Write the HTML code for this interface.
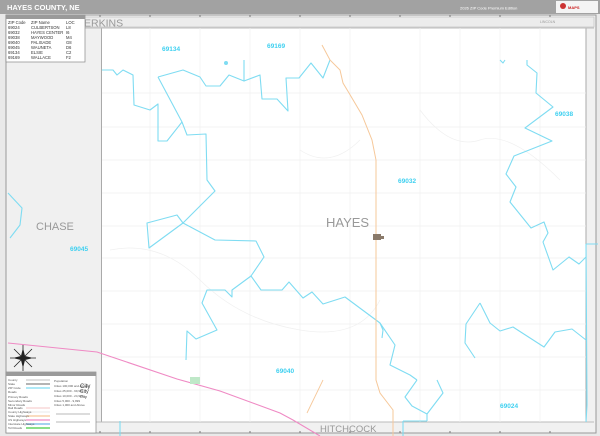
<!DOCTYPE html>
<html><head><meta charset="utf-8"><style>
html,body{margin:0;padding:0;background:#fff;}
body{width:600px;height:436px;overflow:hidden;position:relative;font-family:"Liberation Sans",sans-serif;}
</style></head><body>
<svg width="600" height="436" viewBox="0 0 600 436" xmlns="http://www.w3.org/2000/svg" style="position:absolute;left:0;top:0">
<rect x="0" y="0" width="600" height="436" fill="#e9e9e9"/>
<rect x="0" y="0" width="600" height="14" fill="#a2a2a2"/>
<text x="7" y="10" font-size="7.5" font-weight="bold" fill="#fff" font-family="Liberation Sans">HAYES COUNTY, NE</text>
<text x="460" y="9.5" font-size="4" fill="#fff" font-family="Liberation Sans">2026 ZIP Code Premium Edition</text>
<rect x="556" y="1" width="42" height="12" fill="#f4f4f4"/>
<circle cx="563" cy="6" r="3" fill="#c33"/>
<text x="568" y="9" font-size="4" fill="#c22" font-weight="bold">MAPS</text>
<rect x="6" y="15" width="590" height="418" fill="#f1f1f1" stroke="#999" stroke-width="1"/>
<rect x="8" y="17" width="586" height="10" fill="#ececec" stroke="#bbb" stroke-width="0.6"/>
<rect x="8" y="28" width="94" height="394" fill="#f0f0f0"/>
<rect x="102" y="28" width="484" height="394" fill="#fff"/>
<line x1="101.5" y1="28" x2="101.5" y2="422" stroke="#aaa" stroke-width="1"/>
<line x1="586" y1="28" x2="586" y2="422" stroke="#aaa" stroke-width="1"/>
<line x1="8" y1="422" x2="594" y2="422" stroke="#bbb" stroke-width="1"/>
<line x1="8" y1="28" x2="594" y2="28" stroke="#bbb" stroke-width="1"/>
<g stroke="#777" stroke-width="1">
<line x1="50" y1="15" x2="50" y2="17"/><line x1="100" y1="15" x2="100" y2="17"/><line x1="150" y1="15" x2="150" y2="17"/><line x1="200" y1="15" x2="200" y2="17"/><line x1="250" y1="15" x2="250" y2="17"/><line x1="300" y1="15" x2="300" y2="17"/><line x1="350" y1="15" x2="350" y2="17"/><line x1="400" y1="15" x2="400" y2="17"/><line x1="450" y1="15" x2="450" y2="17"/><line x1="500" y1="15" x2="500" y2="17"/><line x1="550" y1="15" x2="550" y2="17"/>
<line x1="50" y1="431" x2="50" y2="433"/><line x1="100" y1="431" x2="100" y2="433"/><line x1="150" y1="431" x2="150" y2="433"/><line x1="200" y1="431" x2="200" y2="433"/><line x1="250" y1="431" x2="250" y2="433"/><line x1="300" y1="431" x2="300" y2="433"/><line x1="350" y1="431" x2="350" y2="433"/><line x1="400" y1="431" x2="400" y2="433"/><line x1="450" y1="431" x2="450" y2="433"/><line x1="500" y1="431" x2="500" y2="433"/><line x1="550" y1="431" x2="550" y2="433"/>
</g>
<g stroke="#f0f0f0" stroke-width="0.7" fill="none">
<path d="M102 93H586M102 127H586M102 160H586M102 193H586M102 226H586M102 258H586M102 291H586M102 324H586M102 357H586M102 390H586"/>
<path d="M150 28V422M200 28V422M250 28V422M300 28V422M350 28V422M420 28V422M460 28V422M500 28V422M540 28V422"/>
<path d="M110 250Q160 240 200 280T300 330T380 300M420 110Q450 150 480 140T560 180M300 150Q330 170 360 140"/>
</g>
<g stroke="#7fdcf2" stroke-width="1.1" fill="none" stroke-linejoin="round">
<path d="M102 70L113 70L117 75L123 70L133 75L134 105L150 110L158 104L158 141L167 141L182 122"/>
<path d="M158 77L183 70L200 77L206 86L220 86L229 75L244 81L244 60"/>
<path d="M244 81L260 75L262 99L277 99L288 111L286 78L299 78L311 63L323 78L330 60"/>
<path d="M158 77L182 122L187 135L206 134L207 180L215 191L183 223L177 215L147 223L149 248L183 223"/>
<path d="M183 223L215 240L256 241L264 257L251 276L232 290L232 297L225 290L207 290L202 303L217 330L196 339L187 331L186 360"/>
<path d="M251 276L261 290L282 290L289 282L303 298L312 292L323 304L345 297L380 323L383 330L382 338"/>
<path d="M500 60L503 63L505 60M527 60L527 65L537 73L536 93L553 107L525 128L552 141L514 156L506 174L516 187L510 202L531 228L544 222L548 233L543 242L553 270L569 257L579 264L586 257"/>
<path d="M586 244L598 244M586 244L587 405L586 422"/>
<path d="M480 303L466 324L465 343L475 358M480 303L490 323L500 331L513 327L544 347L555 332L572 329L586 340"/>
<path d="M417 380L405 397L412 406L427 414L443 393L437 380M427 414L427 421M403 421L427 421M403 421L403 436"/>
<path d="M8 193L22 208L20 225L10 238"/>
<path d="M120 421L120 436"/>
<path d="M380 323L395 345L390 365L410 375L417 380"/>
</g>
<circle cx="226" cy="63" r="2" fill="#7fdcf2"/>
<path d="M322 45L330 60L340 70L343 83L349 93L362 115L372 140L376 160L376 380L380 393L393 410L393 436" stroke="#f6c89a" stroke-width="1" fill="none"/>
<path d="M323 380L307 413" stroke="#f6c89a" stroke-width="0.9" fill="none"/>
<path d="M8 343L97 352L177 379L220 391L280 413L293 420L320 436" stroke="#ef8ac4" stroke-width="1.1" fill="none"/>
<rect x="190" y="377" width="10" height="7" fill="#bfe8c8"/>
<g fill="#8a7a6a"><rect x="373" y="234" width="8" height="6"/><rect x="378" y="236" width="6" height="3"/></g>
<g font-family="Liberation Sans" fill="#999">
<text x="77" y="26.5" font-size="10.5">PERKINS</text>
<text x="326" y="227" font-size="13">HAYES</text>
<text x="36" y="230" font-size="11">CHASE</text>
<text x="320" y="432" font-size="9.5">HITCHCOCK</text>
<text x="540" y="23" font-size="3.5">LINCOLN</text>
</g>
<g font-family="Liberation Sans" fill="#3fd0f0" font-size="6.5" font-weight="bold">
<text x="162" y="51">69134</text>
<text x="267" y="48">69169</text>
<text x="555" y="116">69038</text>
<text x="398" y="183">69032</text>
<text x="70" y="251">69045</text>
<text x="276" y="373">69040</text>
<text x="500" y="408">69024</text>
</g>
<rect x="6" y="15" width="79" height="47" fill="#fff" stroke="#888" stroke-width="0.7"/>
<rect x="6" y="15" width="79" height="4" fill="#9a9a9a"/>
<g font-family="Liberation Sans" font-size="4.2" fill="#333">
<text x="8" y="24">ZIP Code</text><text x="31" y="24">ZIP Name</text><text x="66" y="24">LOC</text>
<text x="8" y="29">69024</text><text x="31" y="29">CULBERTSON</text><text x="66" y="29">L8</text>
<text x="8" y="34">69032</text><text x="31" y="34">HAYES CENTER</text><text x="66" y="34">I6</text>
<text x="8" y="39">69038</text><text x="31" y="39">MAYWOOD</text><text x="66" y="39">M4</text>
<text x="8" y="44">69040</text><text x="31" y="44">PALISADE</text><text x="66" y="44">G8</text>
<text x="8" y="49">69045</text><text x="31" y="49">WAUNETA</text><text x="66" y="49">D6</text>
<text x="8" y="54">69134</text><text x="31" y="54">ELSIE</text><text x="66" y="54">C2</text>
<text x="8" y="59">69169</text><text x="31" y="59">WALLACE</text><text x="66" y="59">F2</text>
</g>
<g stroke="#222" stroke-width="1" fill="#222">
<path d="M23 345L23 371M10 358L36 358M14 349L32 367M32 349L14 367" stroke-width="0.8"/>
<polygon points="23,350 21,358 25,358"/><polygon points="23,366 21,358 25,358"/>
<polygon points="15,358 23,356 23,360"/><polygon points="31,358 23,356 23,360"/>
</g>
<rect x="6" y="372" width="90" height="61" fill="#fff" stroke="#888" stroke-width="0.7"/>
<rect x="6" y="372" width="90" height="4" fill="#9a9a9a"/>
<g stroke-width="1.2">
<line x1="26" y1="380" x2="50" y2="380" stroke="#ccc"/>
<line x1="26" y1="384" x2="50" y2="384" stroke="#888"/>
<line x1="26" y1="388" x2="50" y2="388" stroke="#7fdcf2"/>
<line x1="26" y1="408" x2="50" y2="408" stroke="#f6d0d0"/>
<line x1="26" y1="412" x2="50" y2="412" stroke="#eee"/>
<line x1="26" y1="416" x2="50" y2="416" stroke="#f6c89a"/>
<line x1="26" y1="420" x2="50" y2="420" stroke="#ef8ac4"/>
<line x1="26" y1="424" x2="50" y2="424" stroke="#6fb8e8"/>
<line x1="26" y1="428" x2="50" y2="428" stroke="#4c4"/>
</g>
<g font-family="Liberation Sans" font-size="3" fill="#555">
<text x="8" y="381">County</text><text x="8" y="385">State</text><text x="8" y="389">ZIP Code</text><text x="8" y="393">Roads</text><text x="8" y="398">Primary Roads</text><text x="8" y="402">Secondary Roads</text><text x="8" y="406">Minor Roads</text><text x="8" y="409">Rail Roads</text><text x="8" y="413">County Highways</text><text x="8" y="417">State Highways</text><text x="8" y="421">US Highways</text><text x="8" y="425">Interstate Highways</text><text x="8" y="429">Toll Roads</text>
<text x="54" y="382">Population</text><text x="54" y="387">Cities 100,000 and Above</text><text x="54" y="392">Cities 25,000 - 99,999</text><text x="54" y="397">Cities 10,000 - 24,999</text><text x="54" y="402">Cities 5,000 - 9,999</text><text x="54" y="406">Cities 1,000 and Above</text>
</g>
<g font-family="Liberation Sans" fill="#333"><text x="80" y="388" font-size="6">City</text><text x="80" y="393" font-size="5">City</text><text x="80" y="398" font-size="4">City</text></g>
<line x1="56" y1="414" x2="90" y2="414" stroke="#777" stroke-width="0.6"/>
<line x1="56" y1="422" x2="90" y2="422" stroke="#777" stroke-width="0.6"/>
</svg>
</body></html>
